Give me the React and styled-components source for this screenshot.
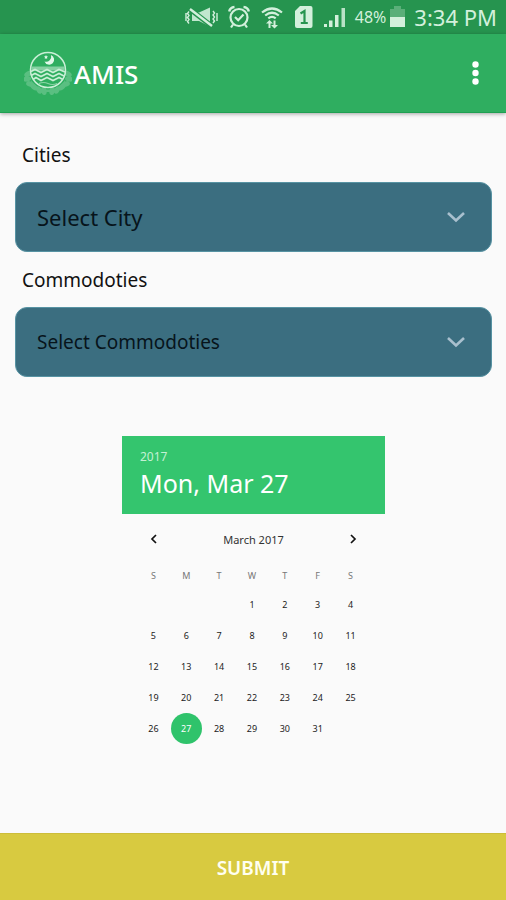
import React, { useState } from "react";
import styled, { createGlobalStyle } from "styled-components";

const GlobalStyle = createGlobalStyle`
  * {
    box-sizing: border-box;
  }

  body {
    margin: 0;
    background: #fafafa;
    color: #111;
    font-family: "Noto Sans", sans-serif;
  }

  button,
  select {
    font-family: inherit;
  }
`;

const Screen = styled.div`
  display: flex;
  flex-direction: column;
  min-height: 100vh;
`;

// Status bar
const StatusBar = styled.div`
  display: flex;
  align-items: center;
  justify-content: flex-end;
  height: 34px;
  padding-right: 9px;
  background: #26944f;
  color: #d3f0dc;

  svg {
    flex: none;
  }
`;

const StatusIcons = styled.div`
  display: flex;
  align-items: center;
  gap: 10px;
  margin-right: 8px;
`;

const BatteryText = styled.span`
  margin-right: 4px;
  font-size: 16px;
`;

const Clock = styled.span`
  margin-left: 9px;
  font-size: 22px;
`;

// App bar
const AppBar = styled.header`
  display: flex;
  align-items: center;
  height: 79px;
  padding: 0 16px 0 24px;
  background: #2fae60;
  color: #ffffff;
  border-bottom: 1px solid #1fa052;
  box-shadow: 0 1px 4px rgba(0, 0, 0, 0.35);
`;

const AppTitle = styled.h1`
  flex: 1;
  margin: 0 0 0 2px;
  padding-top: 2px;
  font-size: 26px;
  line-height: 36px;
  font-weight: 500;
`;

const MenuButton = styled.button`
  display: flex;
  padding: 8px;
  border: none;
  background: none;
  color: inherit;
  cursor: pointer;
`;

// Form
const Main = styled.main`
  flex: 1;
  display: flex;
  flex-direction: column;
  padding: 28px 14px 0 15px;
`;

const Field = styled.div`
  display: flex;
  flex-direction: column;
  margin-bottom: 14px;
`;

const FieldLabel = styled.label`
  margin-bottom: 13px;
  padding-left: 7px;
  font-size: 19px;
  line-height: 28px;
`;

const SelectBox = styled.div`
  position: relative;

  svg {
    position: absolute;
    top: 29px;
    right: 26px;
    pointer-events: none;
  }
`;

const Select = styled.select`
  display: block;
  width: 100%;
  height: 70px;
  padding: 0 56px 0 21px;
  appearance: none;
  border: 1px solid #5793a3;
  border-radius: 12px;
  background: #3b6e80;
  color: #07141b;
  font-size: ${(props) => (props.$large ? "22px" : "19px")};
`;

// Calendar
const Calendar = styled.section`
  align-self: center;
  width: 52%;
  min-width: 263px;
  margin: 45px 0 24px;
`;

const DateHeader = styled.div`
  height: 78px;
  padding: 12px 18px 0;
  background: #34c56e;
  color: #ffffff;
`;

const Year = styled.div`
  font-size: 12px;
  line-height: 18px;
  color: #c4f0d4;
`;

const SelectedDate = styled.div`
  font-size: 25px;
  line-height: 34px;
`;

const MonthBar = styled.div`
  display: flex;
  align-items: center;
  justify-content: space-between;
  height: 48px;
  padding: 2px 21px 0;
  font-size: 11px;
  color: #333;
`;

const ArrowButton = styled.button`
  display: flex;
  padding: 6px;
  border: none;
  background: none;
  color: #111;
  cursor: pointer;
`;

const MonthTable = styled.table`
  width: calc(100% - 33px);
  margin: 0 18px 0 15px;
  table-layout: fixed;
  border-collapse: collapse;

  th {
    height: 27px;
    padding: 0;
    font-size: 9px;
    font-weight: 400;
    color: #777;
  }

  td {
    height: 31px;
    padding: 0;
  }
`;

const DayButton = styled.button`
  display: block;
  width: 31px;
  height: 31px;
  margin: 0 auto;
  padding: 0;
  border: none;
  border-radius: 50%;
  background: ${(props) => (props.$active ? "#2fc36b" : "none")};
  color: ${(props) => (props.$active ? "#ffffff" : "#222")};
  font-size: 9px;
  cursor: pointer;
`;

const SubmitButton = styled.button`
  height: 67px;
  padding: 2px 0 0;
  border: none;
  border-top: 1px solid #cdbd3a;
  background: #d8ca40;
  color: #fffff0;
  font-size: 19px;
  font-weight: 600;
  cursor: pointer;
`;

const MutedIcon = () => (
  <svg width="33" height="22" viewBox="0 0 33 22" fill="none" stroke="currentColor">
    <path d="M7 6.500h7L25 1.500v19L14 15H7z" fill="currentColor" stroke="none" opacity="0.9" />
    <path d="M6 4l20 15.500" stroke="#26944f" strokeWidth="5" />
    <path d="M5 3l22 17" strokeWidth="2.400" />
    <path d="M4 5.500l-1.500 2 1.500 2-1.500 2 1.500 2-1.500 2 1.500 2M1 7v8" strokeWidth="1.400" />
    <path d="M28 5l1.500 2-1.500 2 1.500 2-1.500 2 1.500 2-1.500 2M32 7v8" strokeWidth="1.400" />
  </svg>
);

const AlarmIcon = () => (
  <svg width="22" height="24" viewBox="0 0 22 24" fill="none" stroke="currentColor" strokeWidth="2.200">
    <circle cx="11" cy="12.500" r="8.500" />
    <path d="M7 12l3.200 3.200 5.300-5.700" />
    <path d="M1.200 6.500Q2 2.500 6.500 2M20.800 6.500Q20 2.500 15.500 2" strokeWidth="2.500" />
    <path d="M5 19.500l-2 3M17 19.500l2 3" />
  </svg>
);

const WifiIcon = () => (
  <svg width="24" height="24" viewBox="0 0 24 24" fill="none" stroke="currentColor" strokeWidth="2.200">
    <path d="M2 7.500Q12-.5 22 7.500" />
    <path d="M5.200 10.500Q12 5 18.800 10.500" />
    <path d="M8.300 13.300Q12 10.300 15.700 13.300" />
    <path d="M9.500 23v-6M14.500 15.500v6" strokeWidth="2" />
    <path d="M6 18.500l3.500-3.500 3.500 3.500zM11 20l3.500 3.500L18 20z" fill="currentColor" stroke="none" />
  </svg>
);

const SimIcon = () => (
  <svg width="19" height="24" viewBox="0 0 19 24">
    <path d="M6 1h10.500a2 2 0 0 1 2 2v18a2 2 0 0 1-2 2H3a2 2 0 0 1-2-2V6z" fill="currentColor" />
    <path d="M6.500 8.500l4-2.500v12M6.800 18h7" fill="none" stroke="#26944f" strokeWidth="2.200" />
  </svg>
);

const SignalIcon = () => (
  <svg width="24" height="22" viewBox="0 0 24 22" fill="currentColor">
    <path d="M1 18h3v3H1zM6 14.500h3.500V21H6zM12 9h3.500v12H12z" />
    <path d="M18.500 2H22v19h-3.500z" opacity="0.85" />
  </svg>
);

const BatteryIcon = () => (
  <svg width="15" height="22" viewBox="0 0 15 22" fill="currentColor">
    <path d="M4 0h7v3h4v8H0V3h4z" opacity="0.3" />
    <path d="M0 11h15v10H0z" />
  </svg>
);

// Leaves of the wreath: x, y, rotation
const leaves = [
  [4, 24, -30], [3, 29, -10], [6, 34, 20], [10, 37, 40], [15, 40, 60], [20, 41, 80],
  [44, 24, 30], [45, 29, 10], [42, 34, -20], [38, 37, -40], [33, 40, -60], [28, 41, -80],
];

const Emblem = () => (
  <svg width="48" height="46" viewBox="0 0 48 46" fill="none" stroke="#c9efd6">
    <g fill="#8fd5aa" stroke="none" opacity="0.45">
      {leaves.map(([x, y, turn]) => (
        <ellipse key={`${x}-${y}`} cx={x} cy={y} rx="4" ry="2.600" transform={`rotate(${turn} ${x} ${y})`} />
      ))}
      <path d="M7 30c4 7 10 9.500 17 9.500S37 37 41 30v5c-4 5-10 7-17 7S11 40 7 35z" />
    </g>
    <circle cx="24" cy="20" r="17.500" fill="#2fae60" strokeWidth="1.500" />
    <path d="M27 5a5 5 0 1 1-6.500 6.500A5.200 5.200 0 0 0 27 5z" fill="#e2f8ea" stroke="none" />
    <path d="M22 5l.6 1.300 1.400.2-1 1 .2 1.400-1.200-.7-1.200.7.200-1.400-1-1 1.400-.2z" fill="#e2f8ea" stroke="none" />
    <path d="M7.500 16.500h33v4h-33z" fill="#a9dfbd" stroke="none" opacity="0.7" />
    <g strokeWidth="1.700">
      <path d="M7 21.500l4-2 6 3 6-3 6 3 6-3 6 2.500" />
      <path d="M7 25.500l4-2 6 3 6-3 6 3 6-3 5 2.500" />
      <path d="M9 29.500l3-2 5 3 6-3 6 3 6-3 4 2" />
    </g>
    <path d="M15 33.500q4.500-2 9 0t9 0" strokeWidth="1.200" opacity="0.6" />
  </svg>
);

const MoreIcon = () => (
  <svg width="13" height="26" viewBox="0 0 13 26" fill="currentColor">
    <circle cx="6.500" cy="4.500" r="3.200" />
    <circle cx="6.500" cy="13" r="3.200" />
    <circle cx="6.500" cy="21.500" r="3.200" />
  </svg>
);

const ChevronDown = () => (
  <svg width="20" height="13" viewBox="0 0 20 13" fill="none" stroke="#a9c0ce" strokeWidth="2.600">
    <path d="M2 2l8 7.500L18 2" />
  </svg>
);

const ArrowIcon = ({ d }) => (
  <svg width="10" height="10" viewBox="0 0 10 10" fill="none" stroke="currentColor" strokeWidth="1.700">
    <path d={d} />
  </svg>
);

const weekdays = ["S", "M", "T", "W", "T", "F", "S"];

// March 2017 starts on a Wednesday
const weeks = [0, 1, 2, 3, 4].map((week) =>
  weekdays.map((_, i) => {
    const day = week * 7 + i - 2;
    return day > 0 && day <= 31 ? day : null;
  })
);

const names = ["Sun", "Mon", "Tue", "Wed", "Thu", "Fri", "Sat"];

const App = () => {
  const [selected, setSelected] = useState(27);

  return (
    <>
      <GlobalStyle />
      <Screen>
        <StatusBar>
          <StatusIcons>
            <MutedIcon />
            <AlarmIcon />
            <WifiIcon />
            <SimIcon />
            <SignalIcon />
          </StatusIcons>
          <BatteryText>48%</BatteryText>
          <BatteryIcon />
          <Clock>3:34 PM</Clock>
        </StatusBar>

        <AppBar>
          <Emblem />
          <AppTitle>AMIS</AppTitle>
          <MenuButton aria-label="More options">
            <MoreIcon />
          </MenuButton>
        </AppBar>

        <Main>
          <Field>
            <FieldLabel htmlFor="city">Cities</FieldLabel>
            <SelectBox>
              <Select id="city" $large>
                <option>Select City</option>
              </Select>
              <ChevronDown />
            </SelectBox>
          </Field>

          <Field>
            <FieldLabel htmlFor="commodity">Commodoties</FieldLabel>
            <SelectBox>
              <Select id="commodity">
                <option>Select Commodoties</option>
              </Select>
              <ChevronDown />
            </SelectBox>
          </Field>

          <Calendar>
            <DateHeader>
              <Year>2017</Year>
              <SelectedDate>{`${names[(selected + 2) % 7]}, Mar ${selected}`}</SelectedDate>
            </DateHeader>
            <MonthBar>
              <ArrowButton aria-label="Previous month">
                <ArrowIcon d="M7 1L3 5l4 4" />
              </ArrowButton>
              <span>March 2017</span>
              <ArrowButton aria-label="Next month">
                <ArrowIcon d="M3 1l4 4-4 4" />
              </ArrowButton>
            </MonthBar>
            <MonthTable>
              <thead>
                <tr>
                  {weekdays.map((day, i) => (
                    <th key={i} scope="col">{day}</th>
                  ))}
                </tr>
              </thead>
              <tbody>
                {weeks.map((week, w) => (
                  <tr key={w}>
                    {week.map((day, i) => (
                      <td key={i}>
                        {day && (
                          <DayButton $active={day === selected} onClick={() => setSelected(day)}>
                            {day}
                          </DayButton>
                        )}
                      </td>
                    ))}
                  </tr>
                ))}
              </tbody>
            </MonthTable>
          </Calendar>
        </Main>

        <SubmitButton>SUBMIT</SubmitButton>
      </Screen>
    </>
  );
};

export default App;
